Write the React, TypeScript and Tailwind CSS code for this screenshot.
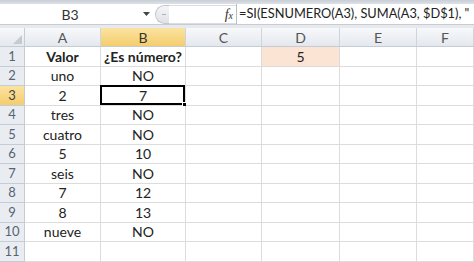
import React from "react";

const cols = ["A", "B", "C", "D", "E", "F"];
const colW = ["w-[76px]", "w-[85px]", "w-[76px]", "w-[78px]", "w-[77px]", "w-[57px]"];

const data: Record<number, string[]> = {
  1: ["Valor", "¿Es número?", "", "5", "", ""],
  2: ["uno", "NO", "", "", "", ""],
  3: ["2", "7", "", "", "", ""],
  4: ["tres", "NO", "", "", "", ""],
  5: ["cuatro", "NO", "", "", "", ""],
  6: ["5", "10", "", "", "", ""],
  7: ["seis", "NO", "", "", "", ""],
  8: ["7", "12", "", "", "", ""],
  9: ["8", "13", "", "", "", ""],
  10: ["nueve", "NO", "", "", "", ""],
  11: ["", "", "", "", "", ""],
};

export default function App() {
  const rows = Array.from({ length: 11 }, (_, i) => i + 1);
  return (
    <div
      className="w-[474px] h-[262px] overflow-hidden bg-white text-[#222]"
      style={{ fontFamily: "Lato, 'Open Sans', sans-serif" }}
    >
      <div className="h-[4px] bg-gradient-to-b from-[#c9ced6] to-[#dde1e7]" />
      <div className="h-[21px] flex items-center bg-white border-b border-[#c8ccd2]">
        <div className="w-[140px] h-full flex items-center justify-center text-[14px] text-[#333]">B3</div>
        <div className="w-[12px] h-full flex items-center justify-center">
          <svg width="7" height="4" viewBox="0 0 7 4">
            <path d="M0 0 L7 0 L3.5 4 Z" fill="#444" />
          </svg>
        </div>
        <div className="w-[3px]" />
        <div className="h-[19px] w-[14px] rounded-l-full border border-r-0 border-[#c2c6cc] bg-gradient-to-b from-[#f4f5f7] to-[#dfe2e6] flex items-center justify-center">
          <div className="w-[4px] h-[1px] bg-[#b0b4ba] ml-[2px]" />
        </div>
        <div className="flex-1 h-[19px] border-t border-b border-[#dadde1] bg-white flex items-center justify-end pr-[3px]">
          <span className="italic text-[14px] text-[#333]" style={{ fontFamily: "'Liberation Serif', serif" }}>
            f<span className="text-[10px]">x</span>
          </span>
        </div>
        <div className="w-[238px] h-full border-l border-[#b8bec6] flex items-center pl-[2px] text-[12.8px] text-[#222] whitespace-nowrap overflow-hidden">
          =SI(ESNUMERO(A3), SUMA(A3, $D$1), "
        </div>
      </div>
      <div className="h-[3px] bg-[#e6e9ee]" />
      <div className="flex h-[19px] bg-gradient-to-b from-[#f7f8fa] to-[#e4e8ee] border-b border-[#c6ccd4]">
        <div className="w-[25px] h-full border-r border-[#c6ccd4] flex items-end justify-end p-[2px]">
          <svg width="9" height="9" viewBox="0 0 9 9">
            <path d="M9 0 L9 9 L0 9 Z" fill="#c4cad2" />
          </svg>
        </div>
        {cols.map((c, i) => (
          <div
            key={c}
            className={`${colW[i]} h-full flex items-center justify-center text-[14px] border-r border-[#d0d5dc] ${
              c === "B" ? "bg-gradient-to-b from-[#fbe3a0] to-[#f4cd6c] text-[#333]" : "text-[#555]"
            }`}
          >
            {c}
          </div>
        ))}
      </div>
      {rows.map((r) => (
        <div key={r} className="flex h-[19.5px]">
          <div
            className={`w-[25px] h-full flex items-center justify-center text-[13px] border-r border-b border-[#c6ccd4] ${
              r === 3 ? "bg-gradient-to-b from-[#fbe3a0] to-[#f4cd6c] text-[#444]" : "bg-[#e9edf2] text-[#5a6270]"
            }`}
          >
            {r}
          </div>
          {cols.map((c, i) => {
            const v = data[r][i];
            const isD1 = r === 1 && c === "D";
            const sel = r === 3 && c === "B";
            return (
              <div
                key={c}
                className={`${colW[i]} relative h-full flex items-center justify-center text-[14px] border-r border-b border-[#dcdcdc] ${
                  isD1 ? "bg-[#fce4d4]" : ""
                } ${r === 1 && i < 2 ? "font-bold" : ""}`}
              >
                {v}
                {sel && (
                  <div className="absolute -left-[1px] -top-[1px] right-0 bottom-0 border-2 border-black">
                    <div className="absolute -right-[4px] -bottom-[4px] w-[5px] h-[5px] bg-black border border-white" />
                  </div>
                )}
              </div>
            );
          })}
        </div>
      ))}
    </div>
  );
}
